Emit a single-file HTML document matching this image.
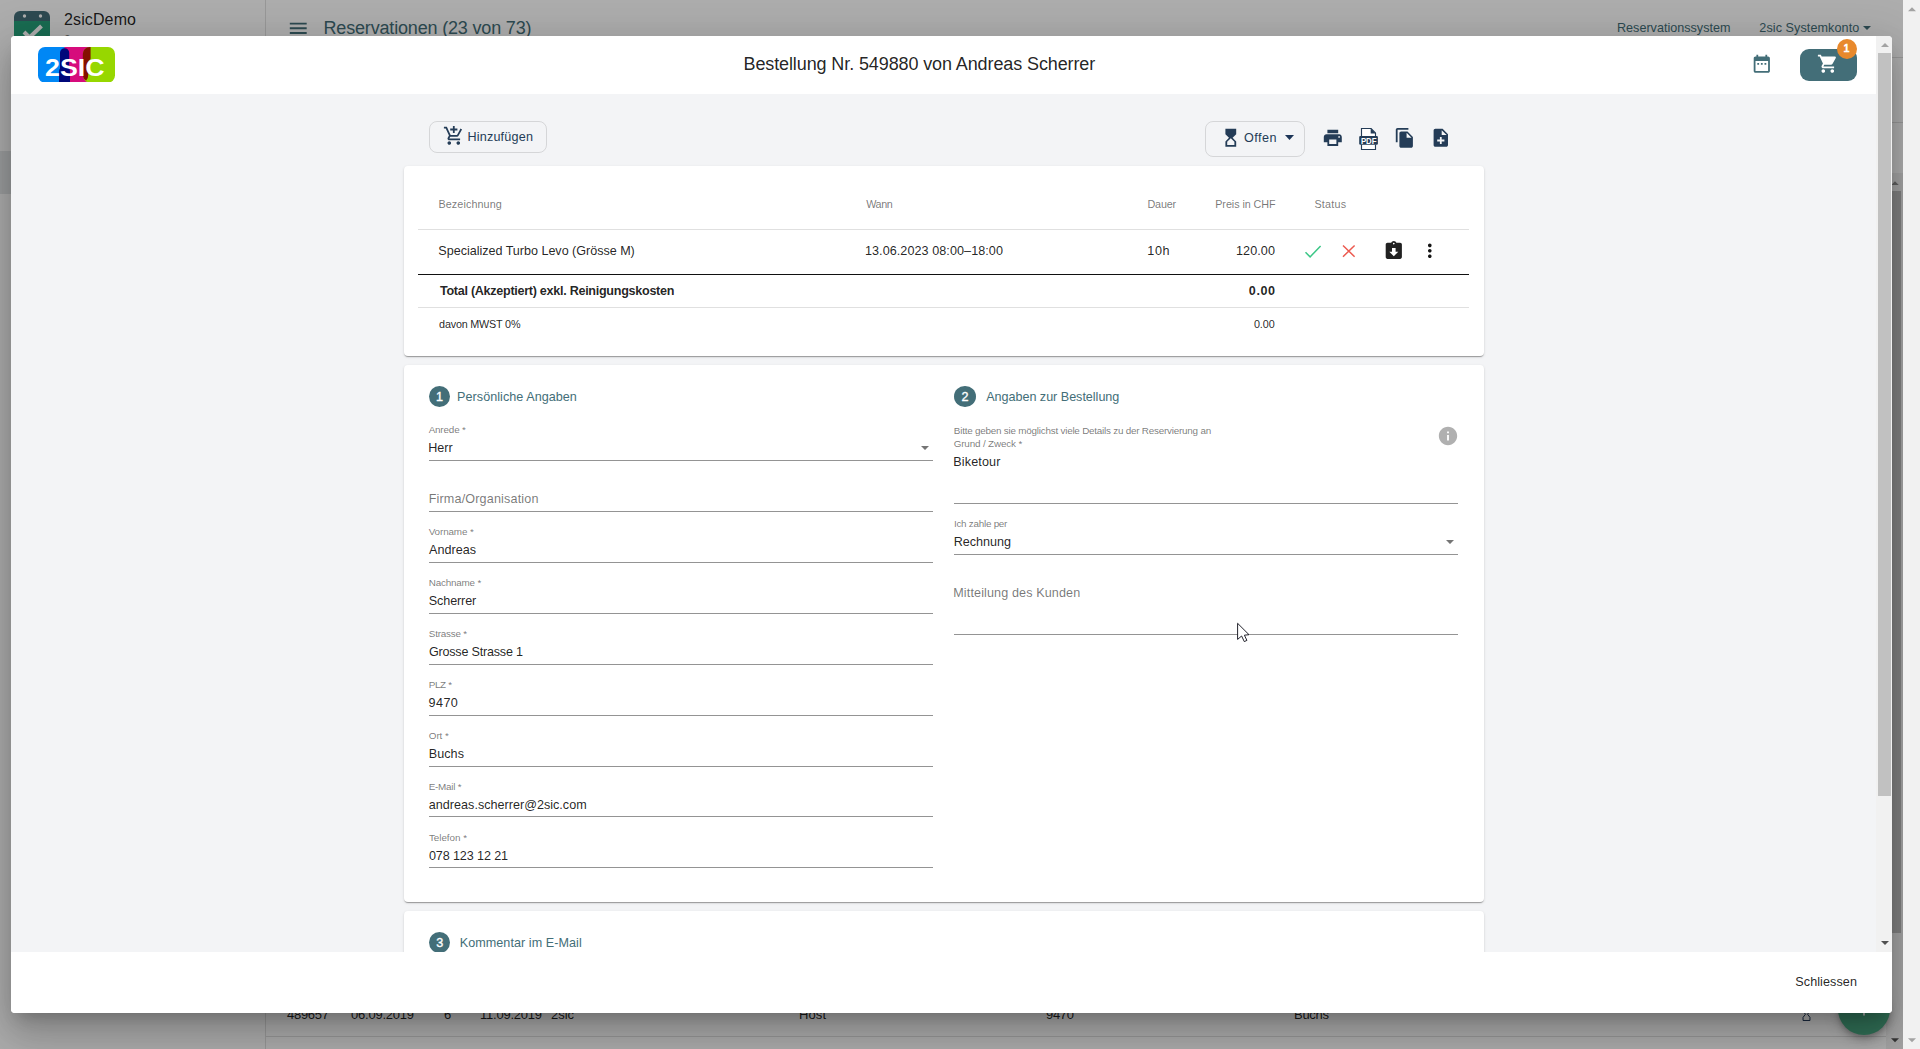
<!DOCTYPE html>
<html lang="de"><head><meta charset="utf-8"><title>Bestellung Nr. 549880 von Andreas Scherrer</title>
<style>
*{box-sizing:border-box;margin:0;padding:0}
html,body{width:1920px;height:1049px;overflow:hidden;background:#fff;font-family:"Liberation Sans",Arial,sans-serif}
div,span.t,svg.ic,section,header,footer,aside,main,nav,button{position:absolute}
span.t{white-space:nowrap;line-height:1}
button{border:0;background:none;font:inherit}
.abs0{left:0;top:0;width:1920px;height:1049px}
.card{background:#fff;border-radius:4px;box-shadow:0 2px 1px -1px rgba(0,0,0,.2),0 1px 1px 0 rgba(0,0,0,.14),0 1px 3px 0 rgba(0,0,0,.12)}
.ul{height:1px;background:rgba(0,0,0,.42)}
.hl{height:1px;background:rgba(0,0,0,.12)}
.num{border-radius:50%;background:#436e78}
</style></head>
<body>
<div id="app" class="abs0" style="width:1903px;background:#fff;overflow:hidden">
<aside style="left:0;top:0;width:266px;height:1049px;border-right:1px solid rgba(0,0,0,.12);background:#fff">
<svg class="ic" style="left:14px;top:11px;width:36px;height:38px" viewBox="0 0 36 38"><path d="M6 0h24a6 6 0 0 1 6 6v5H0V6a6 6 0 0 1 6-6z" fill="#436e78"/><path d="M0 10h36v22a6 6 0 0 1-6 6H6a6 6 0 0 1-6-6z" fill="#25a07a"/><circle cx="10.5" cy="5" r="1.7" fill="#fff"/><circle cx="26.5" cy="5" r="1.7" fill="#fff"/><path d="M10 21l5.5 5.5L27.5 15" fill="none" stroke="#fff" stroke-width="4"/></svg>
<span class="t" style="top:12px;font-size:16px;color:rgba(0,0,0,.87);letter-spacing:0.123px;left:64.00px;">2sicDemo</span>
<span class="t" style="top:34px;font-size:12px;color:rgba(0,0,0,.54);left:64.00px;">2sxc</span>
<div style="left:0px;top:151px;width:265px;height:43px;background:#e5e7e9"></div>
</aside>
<header style="left:266px;top:0;width:1637px;height:56px">
</header>
<svg class="ic" style="left:286.7px;top:16.6px;width:22.5px;height:22.5px;fill:#436e78;" viewBox="0 0 24 24"><path d="M3 18h18v-2H3v2zm0-5h18v-2H3v2zm0-7v2h18V6H3z"/></svg>
<span class="t" style="top:19px;font-size:18px;color:#436e78;letter-spacing:-0.172px;left:323.50px;">Reservationen (23 von 73)</span>
<span class="t" style="top:22px;font-size:12.6px;color:#436e78;letter-spacing:0.006px;left:1617.00px;">Reservationssystem</span>
<span class="t" style="top:22px;font-size:12.6px;color:#436e78;letter-spacing:0.086px;left:1759.30px;">2sic Systemkonto</span>
<svg class="ic" style="left:1863px;top:26px;width:8px;height:4px" viewBox="0 0 8 4"><path d="M0 0h8L4 4z" fill="#436e78"/></svg>
<div class="hl" style="left:266px;top:57px;width:1637px;height:1px;"></div>
<div class="hl" style="left:266px;top:122px;width:1637px;height:1px;"></div>
<div class="hl" style="left:266px;top:173px;width:1637px;height:1px;"></div>
<span class="t" style="top:1008px;font-size:13px;color:rgba(0,0,0,.87);letter-spacing:-0.278px;left:287.00px;">489657</span>
<span class="t" style="top:1008px;font-size:13px;color:rgba(0,0,0,.87);letter-spacing:-0.231px;left:351.00px;">06.09.2019</span>
<span class="t" style="top:1008px;font-size:13px;color:rgba(0,0,0,.87);left:444.00px;">6</span>
<span class="t" style="top:1008px;font-size:13px;color:rgba(0,0,0,.87);letter-spacing:-0.234px;left:480.00px;">11.09.2019</span>
<span class="t" style="top:1008px;font-size:13px;color:rgba(0,0,0,.87);letter-spacing:-0.042px;left:551.00px;">2sic</span>
<span class="t" style="top:1008px;font-size:13px;color:rgba(0,0,0,.87);letter-spacing:0.089px;left:799.00px;">Host</span>
<span class="t" style="top:1008px;font-size:13px;color:rgba(0,0,0,.87);letter-spacing:-0.307px;left:1046.00px;">9470</span>
<span class="t" style="top:1008px;font-size:13px;color:rgba(0,0,0,.87);letter-spacing:-0.285px;left:1294.00px;">Buchs</span>
<div class="hl" style="left:266px;top:1036px;width:1620px;height:1px;"></div>
<div style="left:1886px;top:173px;width:17px;height:876px;background:#f1f1f1"></div>
<div style="left:1888px;top:191px;width:13px;height:742px;background:#bdbdbd"></div>
<svg class="ic" style="left:1890.5px;top:180.5px;width:8px;height:4.5px" viewBox="0 0 8 4"><path d="M0 4h8L4 0z" fill="#8c8c8c"/></svg>
<svg class="ic" style="left:1890.5px;top:1038px;width:8px;height:4.5px" viewBox="0 0 8 4"><path d="M0 0h8L4 4z" fill="#505050"/></svg>
<div style="left:1837.5px;top:983px;width:52px;height:52px;border-radius:50%;background:#49a680;box-shadow:0 3px 5px -1px rgba(0,0,0,.2),0 6px 10px 0 rgba(0,0,0,.14),0 1px 18px 0 rgba(0,0,0,.12)"><svg class="ic" style="left:15px;top:15px;width:22px;height:22px" viewBox="0 0 24 24"><path d="M19 13h-6v6h-2v-6H5v-2h6V5h2v6h6v2z" fill="#fff"/></svg></div>
<svg class="ic" style="left:1801.5px;top:1008px;width:9px;height:13.2px" viewBox="0 0 13 19"><path d="M1.5 1h10v3.5L8 9l3.5 4.5V18h-10v-4.5L5 9 1.5 4.5z" fill="none" stroke="#1c3557" stroke-width="1.4"/></svg>
</div>
<div style="left:0px;top:0px;width:1903px;height:1049px;background:rgba(0,0,0,.32)"></div>
<section id="modal" style="left:11px;top:36px;width:1881px;height:977px;background:#fff;border-radius:4px;overflow:hidden;box-shadow:0 11px 15px -7px rgba(0,0,0,.2),0 24px 38px 3px rgba(0,0,0,.14),0 9px 46px 8px rgba(0,0,0,.12)">
<div class="abs0" style="left:-11px;top:-36px">
<header style="left:11px;top:36px;width:1865px;height:58px;background:#fff">
</header>
<svg class="ic" style="left:38px;top:46.75px;width:77px;height:35.5px" viewBox="0 0 77 35.5">
<path d="M7 0H27V35.5H7a7 7 0 0 1-7-7V7a7 7 0 0 1 7-7z" fill="#0087f5"/>
<path d="M26.500 0H52.6V28.5a7 7 0 0 1-7 7H26.500z" fill="#d60c7c"/>
<path d="M52 0H70a7 7 0 0 1 7 7V28.5a7 7 0 0 1-7 7H52a7 7 0 0 1-7-7V7a7 7 0 0 1 7-7z" fill="#97d700"/>
<path d="M21 35.5V25q0-2.400 1-3.400V5.800a4.600 4.600 0 0 1 9.200 0V21.600q.8 1 .8 3.400V35.500z" fill="#00087a"/>
<path d="M52.600 0h-.8a7 7 0 0 0-7 7V27q0 5 3.400 6.600q2-1.800 2-5.600V16q0-3 2.400-4z" fill="#851000"/>
<text x="7" y="29.3" font-family="Liberation Sans, Arial, sans-serif" font-weight="700" font-size="24" fill="#fff" textLength="59.5" lengthAdjust="spacingAndGlyphs">2SIC</text>
</svg>
<span class="t" style="top:55px;font-size:18px;color:rgba(0,0,0,.87);letter-spacing:-0.109px;left:743.51px;">Bestellung Nr. 549880 von Andreas Scherrer</span>
<svg class="ic" style="left:1751.1px;top:53.2px;width:21.6px;height:21.6px;fill:#436e78;" viewBox="0 0 24 24"><path d="M9 11H7v2h2v-2zm4 0h-2v2h2v-2zm4 0h-2v2h2v-2zm2-7h-1V2h-2v2H8V2H6v2H5c-1.11 0-1.99.9-1.99 2L3 20c0 1.1.89 2 2 2h14c1.1 0 2-.9 2-2V6c0-1.1-.9-2-2-2zm0 16H5V9h14v11z"/></svg>
<button style="left:1800px;top:49px;width:57px;height:32px;border-radius:9px;background:#436e78"></button>
<svg class="ic" style="left:1817px;top:52.8px;width:21.6px;height:21.6px;fill:#fff;" viewBox="0 0 24 24"><path d="M7 18c-1.1 0-1.99.9-1.99 2S5.9 22 7 22s2-.9 2-2-.9-2-2-2zM1 2v2h2l3.6 7.59-1.35 2.45c-.16.28-.25.61-.25.96 0 1.1.9 2 2 2h12v-2H7.42c-.14 0-.25-.11-.25-.25l.03-.12.9-1.63h7.45c.75 0 1.41-.41 1.75-1.03l3.58-6.49c.08-.14.12-.31.12-.48 0-.55-.45-1-1-1H5.21l-.94-2H1zm16 16c-1.1 0-1.99.9-1.99 2s.89 2 1.99 2 2-.9 2-2-.9-2-2-2z"/></svg>
<div style="left:1837px;top:39px;width:19.8px;height:19.8px;border-radius:50%;background:#e8892c"></div>
<span class="t" style="top:43px;font-size:10.8px;color:#fff;left:1843.40px;-webkit-text-stroke:.7px #fff;">1</span>
<main style="left:11px;top:94px;width:1881px;height:858px;background:#f3f4f6;overflow:hidden">
<div class="abs0" style="left:-11px;top:-94px">
<button style="left:429px;top:121px;width:118px;height:32px;border:1px solid rgba(0,0,0,.12);border-radius:8px"></button>
<svg class="ic" style="left:443.1px;top:125.3px;width:21.6px;height:21.6px;fill:#243c57;" viewBox="0 0 24 24"><path d="M11 9h2V6h3V4h-3V1h-2v3H8v2h3v3zm-4 9c-1.1 0-1.99.9-1.99 2S5.9 22 7 22s2-.9 2-2-.9-2-2-2zm10 0c-1.1 0-1.99.9-1.99 2s.89 2 1.99 2 2-.9 2-2-.9-2-2-2zm-9.83-3.25.03-.12.9-1.63h7.45c.75 0 1.41-.41 1.75-1.03l3.86-7.01L19.42 4h-.01l-1.1 2-2.76 5H8.53l-.13-.27L6.16 6l-.95-2-.94-2H1v2h2l3.6 7.59-1.35 2.45c-.16.28-.25.61-.25.96 0 1.1.9 2 2 2h12v-2H7.42c-.13 0-.25-.11-.25-.25z"/></svg>
<span class="t" style="top:131px;font-size:12.6px;color:#243c57;letter-spacing:0.203px;left:467.42px;">Hinzuf&uuml;gen</span>
<button style="left:1205px;top:121px;width:100px;height:36px;border:1px solid rgba(0,0,0,.12);border-radius:8px"></button>
<svg class="ic" style="left:1219.6px;top:127.2px;width:21.6px;height:21.6px;fill:#243c57;" viewBox="0 0 24 24"><path d="M6 2l.01 6L10 12l-3.99 4.01L6 22h12v-6l-4-4 4-3.99V2H6zm10 14.5V20H8v-3.5l4-4 4 4z"/></svg>
<span class="t" style="top:132px;font-size:12.6px;color:#243c57;letter-spacing:0.461px;left:1244.03px;">Offen</span>
<svg class="ic" style="left:1285px;top:135.4px;width:9px;height:5px" viewBox="0 0 9 5"><path d="M0 0h9L4.5 5z" fill="#1c3557"/></svg>
<svg class="ic" style="left:1321.6px;top:127.4px;width:21.6px;height:21.6px;fill:#243c57;" viewBox="0 0 24 24"><path d="M19 8H5c-1.66 0-3 1.34-3 3v6h4v4h12v-4h4v-6c0-1.66-1.34-3-3-3zm-3 11H8v-5h8v5zm3-7c-.55 0-1-.45-1-1s.45-1 1-1 1 .45 1 1-.45 1-1 1zm-1-9H6v4h12V3z"/></svg>
<svg class="ic" style="left:1358px;top:127px;width:21px;height:24px" viewBox="0 0 21 24"><path d="M3.5 9.5V1.5h9.6l4.4 4.6V9.5M17.5 17.5v5H3.5v-5" fill="#fff" stroke="#243c57" stroke-width="1.15"/><path d="M12.7 1.2v5.2h5z" fill="#243c57"/><rect x="1.2" y="8.9" width="18.7" height="8.8" rx="1.2" fill="#243c57"/><text x="2.9" y="16.5" font-family="Liberation Sans, Arial, sans-serif" font-weight="700" font-size="9.4" fill="#fff" textLength="15.6" lengthAdjust="spacingAndGlyphs">PDF</text></svg>
<svg class="ic" style="left:1393.6px;top:127.1px;width:21.6px;height:21.6px;fill:#243c57;" viewBox="0 0 24 24"><path d="M16 1H4c-1.1 0-2 .9-2 2v14h2V3h12V1zm-1 4l6 6v10c0 1.1-.9 2-2 2H7.99C6.89 23 6 22.1 6 21l.01-14c0-1.1.89-2 1.99-2h7zm-1 7h5.5L14 6.5V12z"/></svg>
<svg class="ic" style="left:1429.7px;top:127.4px;width:21.6px;height:21.6px;fill:#243c57;" viewBox="0 0 24 24"><path d="M14 2H6c-1.1 0-1.99.9-1.99 2L4 20c0 1.1.89 2 1.99 2H18c1.1 0 2-.9 2-2V8l-6-6zm2 14h-3v3h-2v-3H8v-2h3v-3h2v3h3v2zm-3-7V3.5L18.5 9H13z"/></svg>
<section class="card" style="left:404px;top:166px;width:1080px;height:190px">
</section>
<span class="t" style="top:199px;font-size:10.8px;color:rgba(0,0,0,.54);letter-spacing:0.092px;left:438.43px;">Bezeichnung</span>
<span class="t" style="top:199px;font-size:10.8px;color:rgba(0,0,0,.54);letter-spacing:-0.377px;left:866.20px;">Wann</span>
<span class="t" style="top:199px;font-size:10.8px;color:rgba(0,0,0,.54);letter-spacing:-0.203px;left:1147.50px;">Dauer</span>
<span class="t" style="top:199px;font-size:10.8px;color:rgba(0,0,0,.54);letter-spacing:-0.068px;left:1215.23px;">Preis in CHF</span>
<span class="t" style="top:199px;font-size:10.8px;color:rgba(0,0,0,.54);letter-spacing:0.223px;left:1314.45px;">Status</span>
<div class="hl" style="left:418px;top:229px;width:1051px;height:1px;"></div>
<span class="t" style="top:245px;font-size:12.6px;color:rgba(0,0,0,.87);letter-spacing:-0.028px;left:438.32px;">Specialized Turbo Levo (Gr&ouml;sse M)</span>
<span class="t" style="top:245px;font-size:12.6px;color:rgba(0,0,0,.87);letter-spacing:0.068px;left:864.93px;">13.06.2023 08:00&ndash;18:00</span>
<span class="t" style="top:245px;font-size:12.6px;color:rgba(0,0,0,.87);letter-spacing:0.607px;left:1147.31px;">10h</span>
<span class="t" style="top:245px;font-size:12.6px;color:rgba(0,0,0,.87);letter-spacing:0.078px;right:644.98px;">120.00</span>
<svg class="ic" style="left:1300px;top:240px;width:24px;height:22px" viewBox="0 0 24 22"><path d="M5.5 12.3l4.6 4.6L20.6 5.9" fill="none" stroke="#3cc787" stroke-width="1.5"/></svg>
<svg class="ic" style="left:1337px;top:240px;width:24px;height:22px" viewBox="0 0 24 22"><path d="M6 5.5l11.6 11.2M17.6 5.5L6 16.7" fill="none" stroke="#ec5a50" stroke-width="1.5"/></svg>
<svg class="ic" style="left:1383px;top:240.3px;width:21.6px;height:21.6px;fill:#212121;" viewBox="0 0 24 24"><path d="M19 3h-4.18C14.4 1.84 13.3 1 12 1c-1.3 0-2.4.84-2.82 2H5c-1.1 0-2 .9-2 2v14c0 1.1.9 2 2 2h14c1.1 0 2-.9 2-2V5c0-1.1-.9-2-2-2zm-7 0c.55 0 1 .45 1 1s-.45 1-1 1-1-.45-1-1 .45-1 1-1zm0 15l-5-5h3V9h4v4h3l-5 5z"/></svg>
<svg class="ic" style="left:1419px;top:240.2px;width:21.6px;height:21.6px;fill:#151515;" viewBox="0 0 24 24"><path d="M12 8c1.1 0 2-.9 2-2s-.9-2-2-2-2 .9-2 2 .9 2 2 2zm0 2c-1.1 0-2 .9-2 2s.9 2 2 2 2-.9 2-2-.9-2-2-2zm0 6c-1.1 0-2 .9-2 2s.9 2 2 2 2-.9 2-2-.9-2-2-2z"/></svg>
<div style="left:418px;top:273.5px;width:1051px;height:2px;background:#111;height:1.5px"></div>
<span class="t" style="top:285px;font-size:12.6px;color:rgba(0,0,0,.87);font-weight:700;letter-spacing:-0.292px;left:440.01px;">Total (Akzeptiert) exkl. Reinigungskosten</span>
<span class="t" style="top:285px;font-size:12.6px;color:rgba(0,0,0,.87);font-weight:700;letter-spacing:0.544px;right:644.48px;">0.00</span>
<div class="hl" style="left:418px;top:307px;width:1051px;height:1px;"></div>
<span class="t" style="top:319px;font-size:10.8px;color:rgba(0,0,0,.87);letter-spacing:-0.200px;left:439.08px;">davon MWST 0%</span>
<span class="t" style="top:319px;font-size:10.8px;color:rgba(0,0,0,.87);letter-spacing:-0.038px;right:645.24px;">0.00</span>
<section class="card" style="left:404px;top:365px;width:1080px;height:537px">
</section>
<div class="num" style="left:429px;top:386px;width:21px;height:21px;"></div>
<span class="t" style="top:391px;font-size:12.6px;color:#fff;left:436.00px;-webkit-text-stroke:.35px #fff;">1</span>
<span class="t" style="top:391px;font-size:12.6px;color:#436e78;letter-spacing:0.040px;left:457.12px;">Pers&ouml;nliche Angaben</span>
<div class="num" style="left:954px;top:386px;width:21.6px;height:21px;"></div>
<span class="t" style="top:391px;font-size:12.6px;color:#fff;left:961.40px;-webkit-text-stroke:.35px #fff;">2</span>
<span class="t" style="top:391px;font-size:12.6px;color:#436e78;letter-spacing:-0.026px;left:986.16px;">Angaben zur Bestellung</span>
<span class="t" style="top:425px;font-size:9.9px;color:rgba(0,0,0,.54);letter-spacing:-0.166px;left:428.63px;">Anrede *</span><span class="t" style="top:442px;font-size:12.6px;color:rgba(0,0,0,.87);letter-spacing:0.012px;left:428.26px;">Herr</span><svg class="ic" style="left:920.9px;top:446px;width:8px;height:4.100px" viewBox="0 0 8 4"><path d="M0 0h8L4 4z" fill="rgba(0,0,0,.54)"/></svg><div class="ul" style="left:429px;top:460px;width:504px;height:1px;"></div>
<span class="t" style="top:493px;font-size:12.6px;color:rgba(0,0,0,.54);letter-spacing:0.154px;left:428.71px;">Firma/Organisation</span><div class="ul" style="left:429px;top:511px;width:504px;height:1px;"></div>
<span class="t" style="top:527px;font-size:9.9px;color:rgba(0,0,0,.54);letter-spacing:-0.128px;left:428.71px;">Vorname *</span><span class="t" style="top:544px;font-size:12.6px;color:rgba(0,0,0,.87);letter-spacing:-0.002px;left:429.11px;">Andreas</span><div class="ul" style="left:429px;top:562px;width:504px;height:1px;"></div>
<span class="t" style="top:578px;font-size:9.9px;color:rgba(0,0,0,.54);letter-spacing:-0.217px;left:428.85px;">Nachname *</span><span class="t" style="top:595px;font-size:12.6px;color:rgba(0,0,0,.87);letter-spacing:-0.119px;left:428.80px;">Scherrer</span><div class="ul" style="left:429px;top:613px;width:504px;height:1px;"></div>
<span class="t" style="top:629px;font-size:9.9px;color:rgba(0,0,0,.54);letter-spacing:-0.239px;left:428.85px;">Strasse *</span><span class="t" style="top:646px;font-size:12.6px;color:rgba(0,0,0,.87);letter-spacing:-0.209px;left:428.89px;">Grosse Strasse 1</span><div class="ul" style="left:429px;top:664px;width:504px;height:1px;"></div>
<span class="t" style="top:680px;font-size:9.9px;color:rgba(0,0,0,.54);letter-spacing:-0.320px;left:428.64px;">PLZ *</span><span class="t" style="top:697px;font-size:12.6px;color:rgba(0,0,0,.87);letter-spacing:0.397px;left:428.58px;">9470</span><div class="ul" style="left:429px;top:715px;width:504px;height:1px;"></div>
<span class="t" style="top:731px;font-size:9.9px;color:rgba(0,0,0,.54);letter-spacing:-0.073px;left:428.81px;">Ort *</span><span class="t" style="top:748px;font-size:12.6px;color:rgba(0,0,0,.87);letter-spacing:0.077px;left:428.70px;">Buchs</span><div class="ul" style="left:429px;top:766px;width:504px;height:1px;"></div>
<span class="t" style="top:782px;font-size:9.9px;color:rgba(0,0,0,.54);letter-spacing:-0.248px;left:428.68px;">E-Mail *</span><span class="t" style="top:799px;font-size:12.6px;color:rgba(0,0,0,.87);letter-spacing:0.007px;left:428.83px;">andreas.scherrer@2sic.com</span><div class="ul" style="left:429px;top:816px;width:504px;height:1px;"></div>
<span class="t" style="top:833px;font-size:9.9px;color:rgba(0,0,0,.54);letter-spacing:-0.037px;left:428.92px;">Telefon *</span><span class="t" style="top:850px;font-size:12.6px;color:rgba(0,0,0,.87);letter-spacing:-0.109px;left:428.90px;">078 123 12 21</span><div class="ul" style="left:429px;top:867px;width:504px;height:1px;"></div>
<span class="t" style="top:426px;font-size:9.9px;color:rgba(0,0,0,.54);letter-spacing:-0.226px;left:953.80px;">Bitte geben sie m&ouml;glichst viele Details zu der Reservierung an</span>
<span class="t" style="top:439px;font-size:9.9px;color:rgba(0,0,0,.54);letter-spacing:-0.158px;left:953.68px;">Grund / Zweck *</span>
<span class="t" style="top:456px;font-size:12.6px;color:rgba(0,0,0,.87);letter-spacing:0.144px;left:953.26px;">Biketour</span>
<div class="ul" style="left:954px;top:503px;width:504px;height:1px;"></div>
<svg class="ic" style="left:1437px;top:425px;width:22px;height:22px;fill:#b0b0b0;" viewBox="0 0 24 24"><path d="M12 2C6.48 2 2 6.48 2 12s4.48 10 10 10 10-4.48 10-10S17.52 2 12 2zm1 15h-2v-6h2v6zm0-8h-2V7h2v2z"/></svg>
<span class="t" style="top:519px;font-size:9.9px;color:rgba(0,0,0,.54);letter-spacing:-0.257px;left:953.95px;">Ich zahle per</span><span class="t" style="top:536px;font-size:12.6px;color:rgba(0,0,0,.87);letter-spacing:-0.003px;left:953.70px;">Rechnung</span><svg class="ic" style="left:1445.9px;top:540px;width:8px;height:4.100px" viewBox="0 0 8 4"><path d="M0 0h8L4 4z" fill="rgba(0,0,0,.54)"/></svg><div class="ul" style="left:954px;top:554px;width:504px;height:1px;"></div>
<span class="t" style="top:587px;font-size:12.6px;color:rgba(0,0,0,.54);letter-spacing:0.118px;left:953.25px;">Mitteilung des Kunden</span>
<div class="ul" style="left:954px;top:634px;width:504px;height:1px;"></div>
<section class="card" style="left:404px;top:911px;width:1080px;height:200px">
</section>
<div class="num" style="left:429px;top:932px;width:21px;height:21px;"></div>
<span class="t" style="top:937px;font-size:12.6px;color:#fff;left:436.20px;-webkit-text-stroke:.35px #fff;">3</span>
<span class="t" style="top:937px;font-size:12.6px;color:#436e78;letter-spacing:0.050px;left:459.74px;">Kommentar im E-Mail</span>
<svg class="ic" style="left:1236px;top:622px;width:15px;height:22px" viewBox="0 0 15 22"><path d="M1.6 1.300V17.400L5.600 14L8.300 19.600L10.900 18.400L8.400 13.200L13 12.700Z" fill="#fff" stroke="#15151f" stroke-width="0.95" stroke-linejoin="round"/></svg>
</div></main>
<div style="left:1876px;top:36px;width:16px;height:916px;background:#f1f1f1"></div>
<div style="left:1878px;top:53px;width:13px;height:743px;background:#c1c1c1"></div>
<svg class="ic" style="left:1880.5px;top:43px;width:8px;height:4px" viewBox="0 0 8 4"><path d="M0 4h8L4 0z" fill="#a3a3a3"/></svg>
<svg class="ic" style="left:1880.5px;top:941px;width:8px;height:4px" viewBox="0 0 8 4"><path d="M0 0h8L4 4z" fill="#505050"/></svg>
<footer style="left:11px;top:952px;width:1881px;height:61px;background:#fff">
</footer>
<span class="t" style="top:976px;font-size:12.6px;color:rgba(0,0,0,.87);letter-spacing:0.075px;left:1795.32px;">Schliessen</span>
</div></section>
<div style="left:1903px;top:0px;width:17px;height:1049px;background:#f1f1f1"><svg class="ic" style="left:4.5px;top:7px;width:8px;height:4.5px" viewBox="0 0 8 4"><path d="M0 4h8L4 0z" fill="#a3a3a3"/></svg><svg class="ic" style="left:4.5px;top:1038px;width:8px;height:4.5px" viewBox="0 0 8 4"><path d="M0 0h8L4 4z" fill="#a3a3a3"/></svg></div>
</body></html>
